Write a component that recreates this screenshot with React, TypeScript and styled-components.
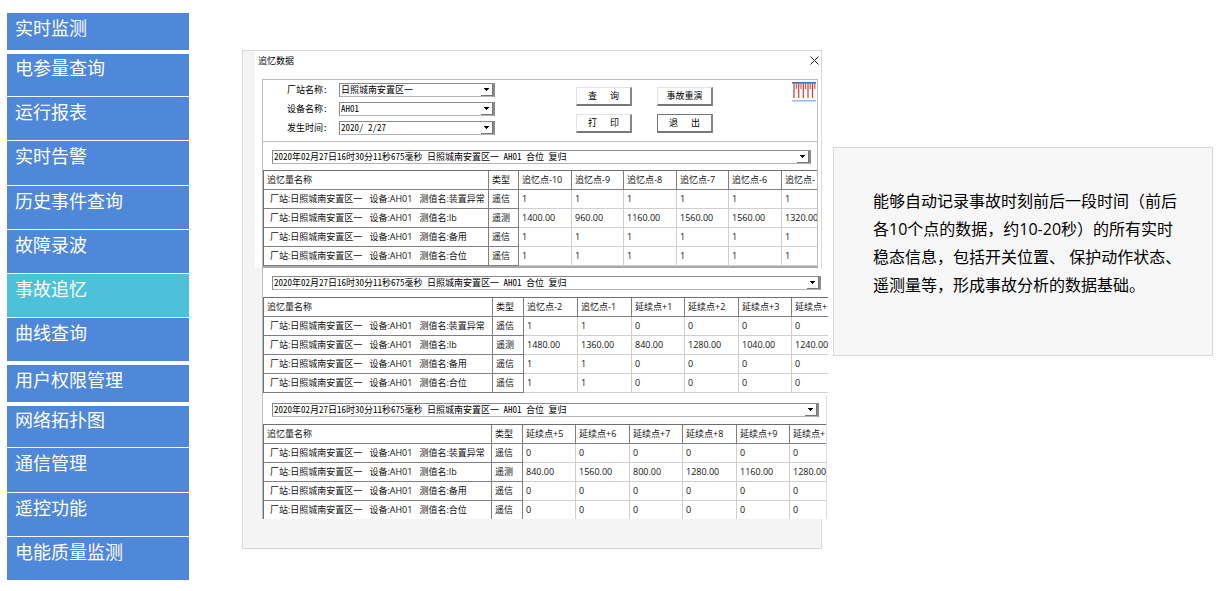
import React from "react";
import styled, { createGlobalStyle } from "styled-components";

const GlobalStyle = createGlobalStyle`
  *, *::before, *::after { box-sizing: border-box; }
  body {
    margin: 0;
    background: #fff;
    color: #000;
    font-family: "Open Sans", "Noto Sans CJK SC", sans-serif;
  }
`;

const Page = styled.div`
  display: grid;
  grid-template-columns: 182px 1fr;
  column-gap: 53px;
  align-items: start;
  padding: 10px 7px 11px;
`;

const Content = styled.div`
  display: grid;
  grid-template-columns: minmax(0, 580fr) minmax(0, 380fr);
  column-gap: 11px;
  align-items: start;
`;

const Nav = styled.nav`
  display: flex;
  flex-direction: column;
  gap: 1px;
`;

const NavLink = styled.a<{ $height: number; $detached?: boolean; $compact?: boolean; $active?: boolean }>`
  height: ${(p) => p.$height}px;
  margin: ${(p) => (p.$detached ? "3px 0" : "0")};
  padding-left: 8px;
  background: ${(p) => (p.$active ? "#4dc1da" : "#4f88d8")};
  color: #fff;
  font-size: 18px;
  line-height: ${(p) => (p.$compact ? 28 : 30)}px;
  text-decoration: none;
`;

const Panel = styled.main`
  margin-top: 40px;
  padding-bottom: 29px;
  border: 1px solid #d8d8d8;
  background: #f4f4f4;
`;

const WindowBox = styled.section`
  margin-left: 12px;
  background: #fff;
`;

const TitleBar = styled.header`
  display: flex;
  justify-content: space-between;
  align-items: flex-start;
  height: 28px;
  padding: 0 2px 0 3px;
`;

const Title = styled.h1`
  margin: 0;
  font-size: 9px;
  line-height: 19px;
  font-weight: 400;
`;

const CloseButton = styled.button`
  display: flex;
  margin: 5px 0 0;
  padding: 0;
  border: 0;
  background: none;
`;

const Group = styled.div`
  margin: 0 3px 0 7px;
  border: 1px solid #bcbcbc;
  border-bottom: 2px solid #a8a8a8;
`;

const QueryBar = styled.form`
  display: flex;
  align-items: flex-start;
  height: 62px;
  border-bottom: 1px solid #bcbcbc;
`;

const Fields = styled.div`
  display: grid;
  grid-template-columns: 52px 156px;
  grid-auto-rows: 14px;
  row-gap: 5px;
  padding: 3px 0 0 24px;
`;

const FieldLabel = styled.label`
  font-family: "Noto Sans CJK SC", sans-serif;
  font-feature-settings: "hwid";
  font-size: 9px;
  line-height: 14px;
`;

const ComboFrame = styled.span`
  display: grid;
  height: 14px;
  border: 1px solid #8a8a8a;
  border-right-width: 2px;
  border-bottom-color: #b4b4b4;
`;

const ComboSelect = styled.select`
  grid-area: 1 / 1;
  appearance: none;
  width: 100%;
  height: 12px;
  margin: 0;
  padding: 0 14px 0 1px;
  border: 0;
  border-radius: 0;
  background: #fff;
  color: #000;
  font-family: "Noto Sans CJK SC", sans-serif;
  font-feature-settings: "hwid";
  font-size: 9px;
  line-height: 12px;
`;

const ComboArrow = styled.span`
  grid-area: 1 / 1;
  justify-self: end;
  display: flex;
  align-items: center;
  justify-content: center;
  width: 12px;
  height: 12px;
  border-right: 1px solid #777;
  border-bottom: 1px solid #777;
  background: #fff;
  pointer-events: none;
`;

const Actions = styled.div`
  display: grid;
  grid-template-columns: 56px 56px;
  grid-auto-rows: 19px;
  gap: 8px 25px;
  padding: 7px 0 0 81px;
`;

const ActionButton = styled.button<{ $default?: boolean }>`
  margin: 0;
  padding: 0;
  border: solid ${(p) => (p.$default ? "#777" : "#e4e4e4")};
  border-width: 1px 2px 2px 1px;
  border-right-color: #858585;
  border-bottom-color: #777;
  background: #fff;
  color: #000;
  font-family: "Noto Sans CJK SC", sans-serif;
  font-size: 9px;
  line-height: 14px;
  white-space: pre;
`;

const WaveIcon = styled.svg`
  display: block;
  margin: 2px 0 0 auto;
`;

const ComboRow = styled.div<{ $bottom: number; $right: number }>`
  padding: 8px ${(p) => p.$right}px ${(p) => p.$bottom}px 9px;
`;

const Capture = styled.section<{ $overhang: number; $edge?: boolean }>`
  margin: 0 -${(p) => p.$overhang}px 0 19px;
  padding-bottom: ${(p) => (p.$edge ? 0 : 2)}px;
  border-left: 1px solid #bcbcbc;
  border-right: ${(p) => (p.$edge ? "1px solid #dedede" : "0")};
  background: #fff;
`;

const TableClip = styled.div`
  overflow: hidden;
`;

const DataTable = styled.table`
  table-layout: fixed;
  width: 0;
  border-collapse: separate;
  border-spacing: 0;
  border-top: 1px solid #707070;
  border-left: 1px solid #707070;
  font-size: 9px;
  line-height: 16px;
  color: #111;
`;

const HeadCell = styled.th`
  height: 19px;
  padding: 0 0 0 3px;
  border-right: 1px solid #808080;
  border-bottom: 1px solid #808080;
  font-weight: 400;
  text-align: left;
  white-space: pre;
`;

const Cell = styled.td<{ $fixed?: boolean; $name?: boolean; $last?: boolean }>`
  height: ${(p) => (p.$last ? 18 : 19)}px;
  padding: 0 0 0 ${(p) => (p.$name ? 6 : 3)}px;
  border-right: 1px solid ${(p) => (p.$fixed ? "#808080" : "#cfcfcf")};
  border-bottom: ${(p) => (p.$last ? "0" : p.$fixed ? "1px solid #808080" : "1px solid #cfcfcf")};
  white-space: pre;
`;

const Note = styled.aside`
  margin-top: 137px;
  padding: 39px 24px 56px 39px;
  border: 1px solid #d8d8d8;
  background: #f7f7f7;
`;

const NoteText = styled.p`
  margin: 0;
  font-size: 16px;
  line-height: 28px;
`;

type NavItem = { label: string; height: number; detached?: boolean; compact?: boolean; active?: boolean };

const navItems: NavItem[] = [
  { label: "实时监测", height: 37, detached: true },
  { label: "电参量查询", height: 42, compact: true },
  { label: "运行报表", height: 43 },
  { label: "实时告警", height: 44 },
  { label: "历史事件查询", height: 43 },
  { label: "故障录波", height: 43 },
  { label: "事故追忆", height: 43, active: true },
  { label: "曲线查询", height: 43 },
  { label: "用户权限管理", height: 37, detached: true },
  { label: "网络拓扑图", height: 41, compact: true },
  { label: "通信管理", height: 44 },
  { label: "遥控功能", height: 43 },
  { label: "电能质量监测", height: 43 },
];

const eventText = "2020年02月27日16时30分11秒675毫秒 日照城南安置区一 AH01 合位 复归";

const points = [
  { name: "装置异常", kind: "遥信" },
  { name: "Ib", kind: "遥测" },
  { name: "备用", kind: "遥信" },
  { name: "合位", kind: "遥信" },
];

type Recall = { widths: number[]; heads: string[]; signal: string[]; current: string[] };

const before: Recall = {
  widths: [225, 30, 53, 52, 53, 52, 53, 53],
  heads: ["追忆点-10", "追忆点-9", "追忆点-8", "追忆点-7", "追忆点-6", "追忆点-"],
  signal: ["1", "1", "1", "1", "1", "1"],
  current: ["1400.00", "960.00", "1160.00", "1560.00", "1560.00", "1320.00"],
};

const around: Recall = {
  widths: [229, 31, 54, 54, 53, 54, 53, 54],
  heads: ["追忆点-2", "追忆点-1", "延续点+1", "延续点+2", "延续点+3", "延续点+"],
  signal: ["1", "1", "0", "0", "0", "0"],
  current: ["1480.00", "1360.00", "840.00", "1280.00", "1040.00", "1240.00"],
};

const after: Recall = {
  widths: [228, 31, 53, 54, 53, 54, 53, 54],
  heads: ["延续点+5", "延续点+6", "延续点+7", "延续点+8", "延续点+9", "延续点+"],
  signal: ["0", "0", "0", "0", "0", "0"],
  current: ["840.00", "1560.00", "800.00", "1280.00", "1160.00", "1280.00"],
};

function Combo({ value, id, label }: { value: string; id?: string; label?: string }) {
  return (
    <ComboFrame>
      <ComboSelect id={id} aria-label={label} defaultValue={value}>
        <option value={value}>{value}</option>
      </ComboSelect>
      <ComboArrow>
        <svg width="5" height="3" viewBox="0 0 5 3" shapeRendering="crispEdges" aria-hidden="true">
          <path d="M0 0h5v1H4v1H3v1H2V2H1V1H0z" fill="#000" />
        </svg>
      </ComboArrow>
    </ComboFrame>
  );
}

function RecallTable({ data, open }: { data: Recall; open?: boolean }) {
  return (
    <TableClip>
      <DataTable>
        <colgroup>
          {data.widths.map((w, i) => (
            <col key={i} width={w} />
          ))}
        </colgroup>
        <thead>
          <tr>
            {["追忆量名称", "类型", ...data.heads].map((h) => (
              <HeadCell key={h} scope="col">{h}</HeadCell>
            ))}
          </tr>
        </thead>
        <tbody>
          {points.map((p, row) => {
            const last = open && row === points.length - 1;
            const values = p.kind === "遥测" ? data.current : data.signal;
            return (
              <tr key={p.name}>
                <Cell $fixed $name $last={last}>{`厂站:日照城南安置区一   设备:AH01   测值名:${p.name}`}</Cell>
                <Cell $fixed $last={last}>{p.kind}</Cell>
                {values.map((v, i) => (
                  <Cell key={i} $last={last}>{v}</Cell>
                ))}
              </tr>
            );
          })}
        </tbody>
      </DataTable>
    </TableClip>
  );
}

export default function App() {
  return (
    <>
      <GlobalStyle />
      <Page>
        <Nav>
          {navItems.map((n) => (
            <NavLink
              key={n.label}
              href="#"
              $height={n.height}
              $detached={n.detached}
              $compact={n.compact}
              $active={n.active}
              aria-current={n.active ? "page" : undefined}
            >
              {n.label}
            </NavLink>
          ))}
        </Nav>

        <Content>
          <Panel>
            <WindowBox>
              <TitleBar>
                <Title>追忆数据</Title>
                <CloseButton type="button" aria-label="关闭">
                  <svg width="9" height="9" viewBox="0 0 9 9" aria-hidden="true">
                    <path d="M0.5 0.5l8 8M8.5 0.5l-8 8" stroke="#222" strokeWidth="1" />
                  </svg>
                </CloseButton>
              </TitleBar>
              <Group>
                <QueryBar onSubmit={(e) => e.preventDefault()}>
                  <Fields>
                    <FieldLabel htmlFor="station">厂站名称:</FieldLabel>
                    <Combo id="station" value="日照城南安置区一" />
                    <FieldLabel htmlFor="device">设备名称:</FieldLabel>
                    <Combo id="device" value="AH01" />
                    <FieldLabel htmlFor="date">发生时间:</FieldLabel>
                    <Combo id="date" value="2020/ 2/27" />
                  </Fields>
                  <Actions>
                    <ActionButton type="submit">{"查\u3000  询"}</ActionButton>
                    <ActionButton type="button">事故重演</ActionButton>
                    <ActionButton type="button">{"打\u3000  印"}</ActionButton>
                    <ActionButton type="button" $default>{"退\u3000  出"}</ActionButton>
                  </Actions>
                  <WaveIcon width="25" height="20" viewBox="0 0 25 20" aria-hidden="true">
                    <path d="M2 1v15M6.7 1v15M11.3 1v15M16 1v15M20.5 1v15" stroke="#c23a3a" strokeWidth="1.2" />
                    <path d="M4.4 1v6M9 1v6M13.6 1v6M18.2 1v6M22.8 1v6" stroke="#c96060" strokeWidth="1.2" />
                    <path d="M0 0.8h24" stroke="#3a74d0" strokeWidth="1.6" />
                    <path d="M0 18.8h24" stroke="#9bbcf0" strokeWidth="1.6" />
                  </WaveIcon>
                </QueryBar>
                <ComboRow $bottom={6} $right={6}>
                  <Combo value={eventText} label="追忆事件" />
                </ComboRow>
                <RecallTable data={before} />
              </Group>
            </WindowBox>

            <Capture $overhang={7}>
              <ComboRow $bottom={7} $right={7}>
                <Combo value={eventText} label="追忆事件" />
              </ComboRow>
              <RecallTable data={around} />
            </Capture>

            <Capture $overhang={6} $edge>
              <ComboRow $bottom={7} $right={7}>
                <Combo value={eventText} label="追忆事件" />
              </ComboRow>
              <RecallTable data={after} open />
            </Capture>
          </Panel>

          <Note>
            <NoteText>
              能够自动记录事故时刻前后一段时间（前后
              <br />
              各10个点的数据，约10-20秒）的所有实时
              <br />
              稳态信息，包括开关位置、 保护动作状态、
              <br />
              遥测量等，形成事故分析的数据基础。
            </NoteText>
          </Note>
        </Content>
      </Page>
    </>
  );
}
